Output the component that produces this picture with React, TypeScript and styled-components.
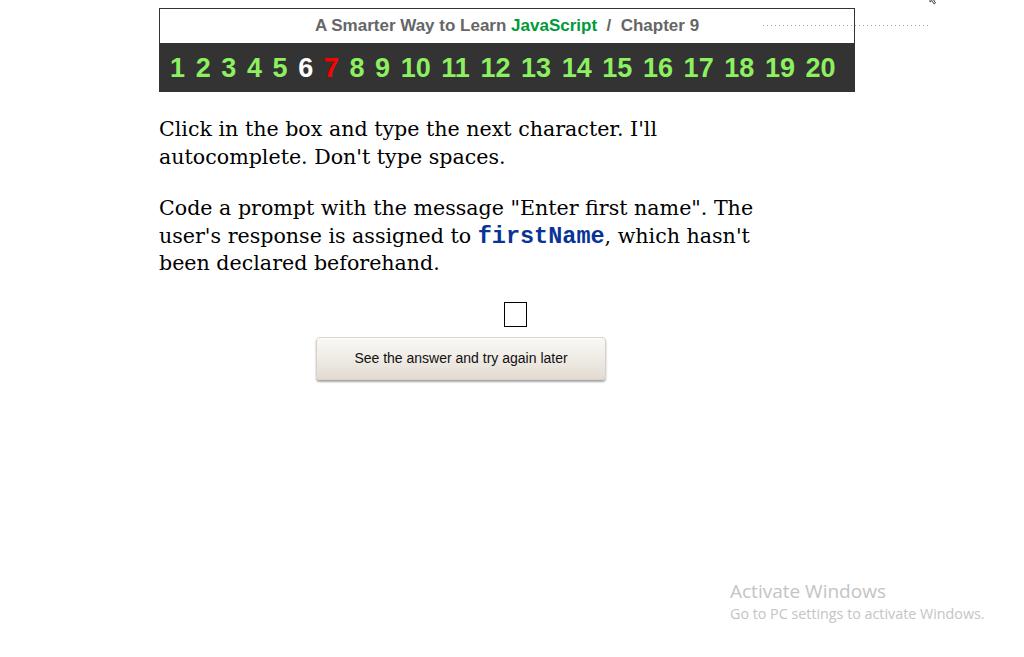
import React from "react";
import styled, { createGlobalStyle } from "styled-components";

const Global = createGlobalStyle`
  html, body { margin: 0; padding: 0; background: #ffffff; }
  body { font-family: "Liberation Serif", serif; }
`;

const Page = styled.div`
  position: relative;
  width: 1024px;
  height: 657px;
  overflow: hidden;
  background: #fff;
`;

const Column = styled.div`
  display: flex;
  flex-direction: column;
  padding: 8px 0 0 159px;
`;

const Header = styled.div`
  width: 696px;
  box-sizing: border-box;
  border: 1px solid #333;
  border-bottom: none;
  display: flex;
  flex-direction: column;
`;

const TitleRow = styled.div`
  height: 34px;
  display: flex;
  align-items: center;
  justify-content: center;
  font-family: "Liberation Sans", Arial, sans-serif;
  font-weight: bold;
  font-size: 17px;
  color: #666666;
  white-space: pre;
`;

const Green = styled.span`
  color: #009a3a;
`;

const NavBar = styled.nav`
  height: 49px;
  margin: 0 -1px;
  background: #333333;
  display: flex;
  align-items: center;
  padding-left: 11px;
  gap: 10.6px;
  font-family: "Liberation Sans", Arial, sans-serif;
  font-weight: bold;
  font-size: 27px;
`;

const NavNum = styled.span<{ $state?: "current" | "active" }>`
  color: ${(p) =>
    p.$state === "current" ? "#ffffff" : p.$state === "active" ? "#ff0000" : "#8cf060"};
  line-height: 1;
  margin-top: 2px;
`;

const Instructions = styled.div`
  width: 612px;
  margin-top: 24px;
  font-family: "DejaVu Serif", Georgia, serif;
  font-size: 20.6px;
  line-height: 27.5px;
  color: #000;
`;

const Para = styled.p`
  margin: 0 0 24px 0;
`;

const Code = styled.code`
  font-family: "Liberation Mono", "Courier New", monospace;
  font-weight: bold;
  font-size: 23.5px;
  line-height: 1;
  color: #0a3396;
`;

const AnswerArea = styled.div`
  display: flex;
  flex-direction: column;
`;

const CharBox = styled.div`
  width: 23px;
  height: 25px;
  box-sizing: border-box;
  border: 1px solid #000;
  margin-left: 345px;
`;

const AnswerButton = styled.button`
  margin: 10px 0 0 157px;
  width: 290px;
  height: 43px;
  border: 1px solid #d8d2ca;
  border-radius: 4px;
  background: linear-gradient(#faf8f5 0%, #efebe5 50%, #e2dbd1 100%);
  box-shadow: 0 2px 2px rgba(0, 0, 0, 0.35), inset 0 1px 0 #fff;
  font-family: "Liberation Sans", Arial, sans-serif;
  font-size: 14px;
  color: #111;
  padding: 0;
  cursor: pointer;
`;

const DottedLine = styled.div`
  position: absolute;
  left: 763px;
  top: 25px;
  width: 166px;
  height: 1px;
  background-image: linear-gradient(to right, #8a8a98 1px, transparent 1px);
  background-size: 4px 1px;
  opacity: 0.75;
`;

const Cursor = styled.svg`
  position: absolute;
  left: 929px;
  top: -4px;
`;

const Watermark = styled.div`
  position: absolute;
  left: 730px;
  top: 578px;
  font-family: "Open Sans", "Noto Sans", sans-serif;
  color: #c4c4c4;
  display: flex;
  flex-direction: column;
`;

const WmTitle = styled.div`
  font-size: 19px;
  line-height: 26px;
`;

const WmSub = styled.div`
  font-size: 14.3px;
  line-height: 20px;
`;

const nums = Array.from({ length: 20 }, (_, i) => i + 1);

export default function App() {
  return (
    <Page>
      <Global />
      <Column>
        <Header>
          <TitleRow>
            A Smarter Way to Learn <Green>JavaScript</Green>  /  Chapter 9
          </TitleRow>
          <NavBar>
            {nums.map((n) => (
              <NavNum key={n} $state={n === 6 ? "current" : n === 7 ? "active" : undefined}>
                {n}
              </NavNum>
            ))}
          </NavBar>
        </Header>
        <Instructions>
          <Para>Click in the box and type the next character. I'll autocomplete. Don't type spaces.</Para>
          <Para>
            Code a prompt with the message "Enter first name". The user's response is assigned to{" "}
            <Code>firstName</Code>, which hasn't been declared beforehand.
          </Para>
        </Instructions>
        <AnswerArea>
          <CharBox />
          <AnswerButton>See the answer and try again later</AnswerButton>
        </AnswerArea>
      </Column>
      <DottedLine />
      <Cursor width="12" height="10" viewBox="0 0 12 10">
        <path d="M1 0 L1 6 L3 4.5 L5 8 L6.5 7 L4.5 3.8 L7 3.5 Z" fill="#fff" stroke="#222" strokeWidth="0.8" />
      </Cursor>
      <Watermark>
        <WmTitle>Activate Windows</WmTitle>
        <WmSub>Go to PC settings to activate Windows.</WmSub>
      </Watermark>
    </Page>
  );
}
